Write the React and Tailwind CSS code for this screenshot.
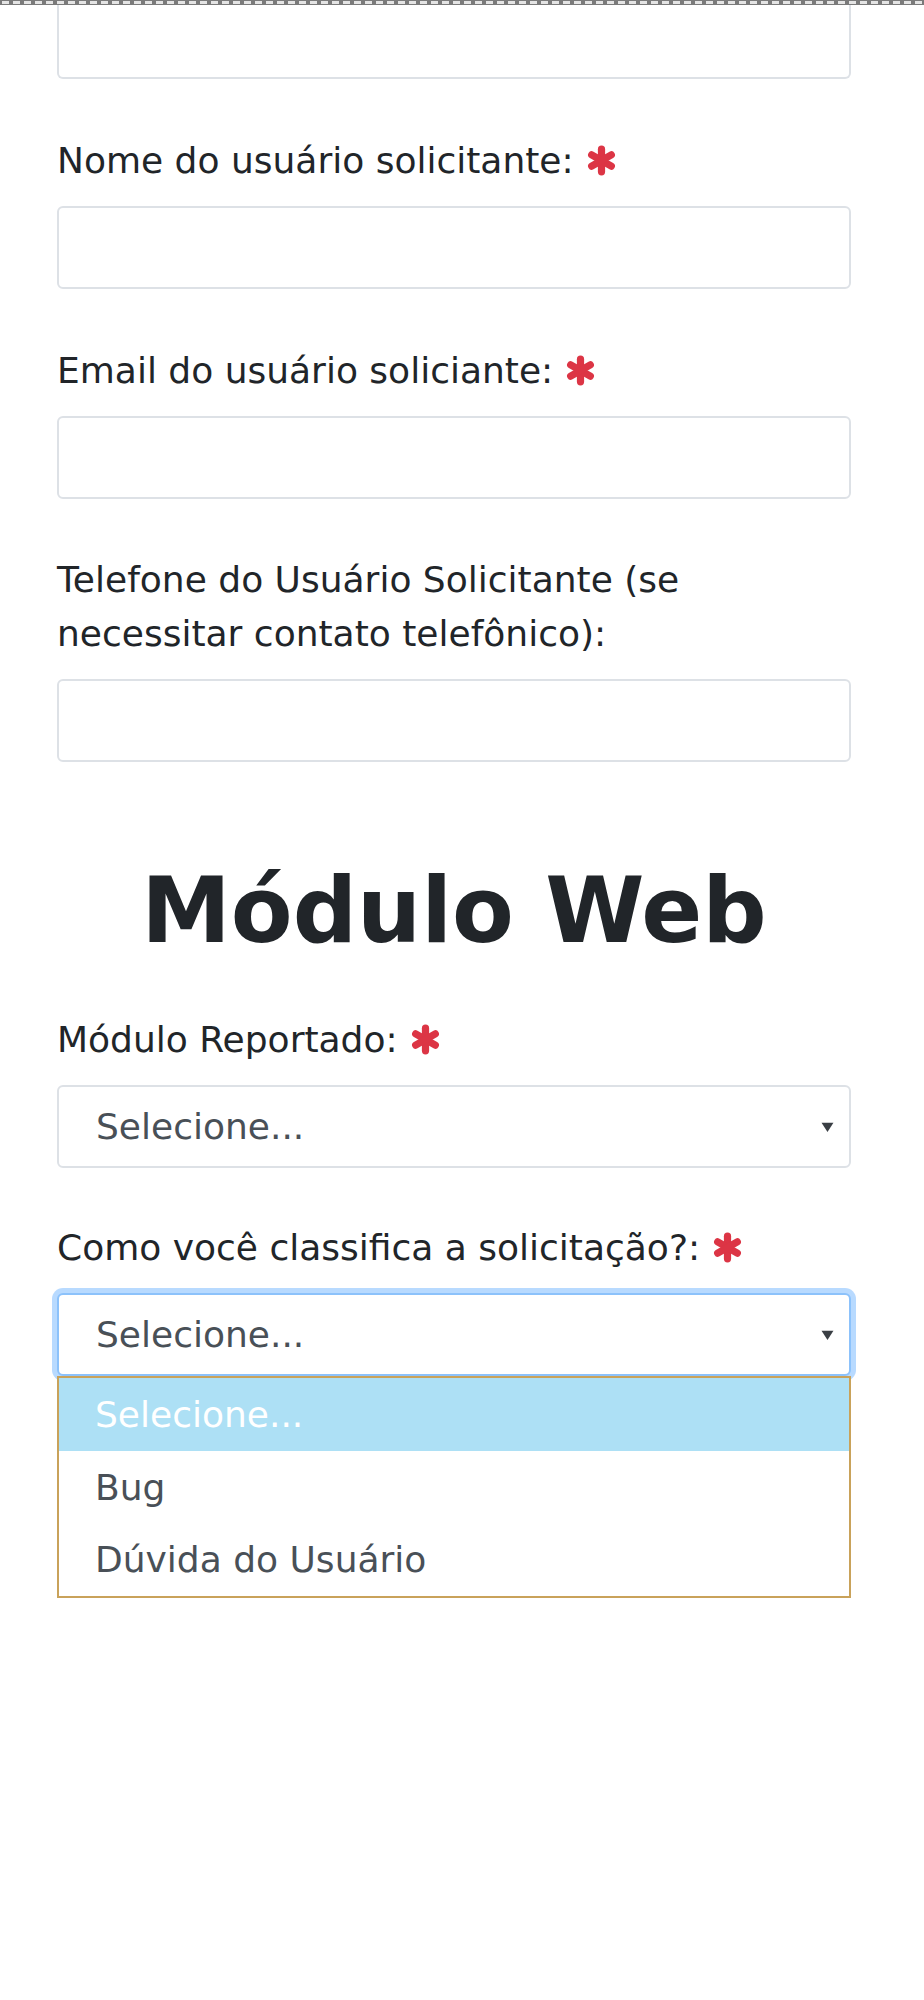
import React from "react";

function Asterisk() {
  return (
    <svg width="31" height="31" viewBox="0 0 30 30" className="inline-block align-middle ml-[12px] -mt-[6px]">
      <g stroke="#dc3545" strokeWidth="7" strokeLinecap="round">
        <line x1="15" y1="4" x2="15" y2="26" />
        <line x1="5.5" y1="9.5" x2="24.5" y2="20.5" />
        <line x1="5.5" y1="20.5" x2="24.5" y2="9.5" />
      </g>
    </svg>
  );
}

function Label({ children, required, className = "" }) {
  return (
    <div className={"text-[36px] leading-[54px] text-[#212529] " + className}>
      {children}
      {required && <Asterisk />}
    </div>
  );
}

function Input() {
  return <div className="mt-[18px] h-[83px] rounded-[6px] border-2 border-[#dde1e6] bg-white" />;
}

function Arrow() {
  return (
    <svg width="13" height="12" viewBox="0 0 12 10">
      <path d="M0.5 1 L11.5 1 L6 9.5 Z" fill="#3a3f44" />
    </svg>
  );
}

function Select({ focused }) {
  return (
    <div
      className={
        "mt-[18px] h-[83px] rounded-[6px] bg-white flex items-center justify-between pl-[37px] pr-[15px] text-[36px] text-[#495057] " +
        (focused
          ? "border-2 border-[#8cc2fb] shadow-[0_0_0_5px_rgba(0,123,255,0.28)]"
          : "border-2 border-[#dde1e6]")
      }
    >
      <span>Selecione...</span>
      <Arrow />
    </div>
  );
}

export default function App() {
  return (
    <div className="min-h-[2000px] bg-white font-['DejaVu_Sans',Verdana,sans-serif]">
      <div className="h-[5px] border-y border-[#7a7a7a] bg-[repeating-linear-gradient(90deg,#7a7a7a_0px,#7a7a7a_2px,#e4e4e4_2px,#e4e4e4_9px,#7a7a7a_9px,#7a7a7a_11px)]" />
      <div className="pl-[57px] pr-[73px]">
        <div className="h-[74px] rounded-b-[6px] border-2 border-t-0 border-[#dde1e6] bg-white" />

        <Label required className="mt-[55px]">Nome do usuário solicitante:</Label>
        <Input />

        <Label required className="mt-[55px]">Email do usuário soliciante:</Label>
        <Input />

        <Label className="mt-[54px]">
          Telefone do Usuário Solicitante (se
          <br />
          necessitar contato telefônico):
        </Label>
        <Input />

        <h1 className="mt-[95px] text-center text-[90px] leading-[108px] font-bold text-[#212529]">Módulo Web</h1>

        <Label required className="mt-[48px]">Módulo Reportado:</Label>
        <Select />

        <Label required className="mt-[53px]">Como você classifica a solicitação?:</Label>
        <div className="relative">
          <Select focused />
          <div className="absolute left-0 right-0 top-full z-10 border-2 border-[#c9a25a] bg-white text-[36px]">
            <div className="h-[73px] bg-[#ade0f5] text-white flex items-center pl-[36px]">Selecione...</div>
            <div className="h-[73px] text-[#495057] flex items-center pl-[36px]">Bug</div>
            <div className="h-[72px] text-[#495057] flex items-center pl-[36px]">Dúvida do Usuário</div>
          </div>
        </div>
      </div>
    </div>
  );
}
